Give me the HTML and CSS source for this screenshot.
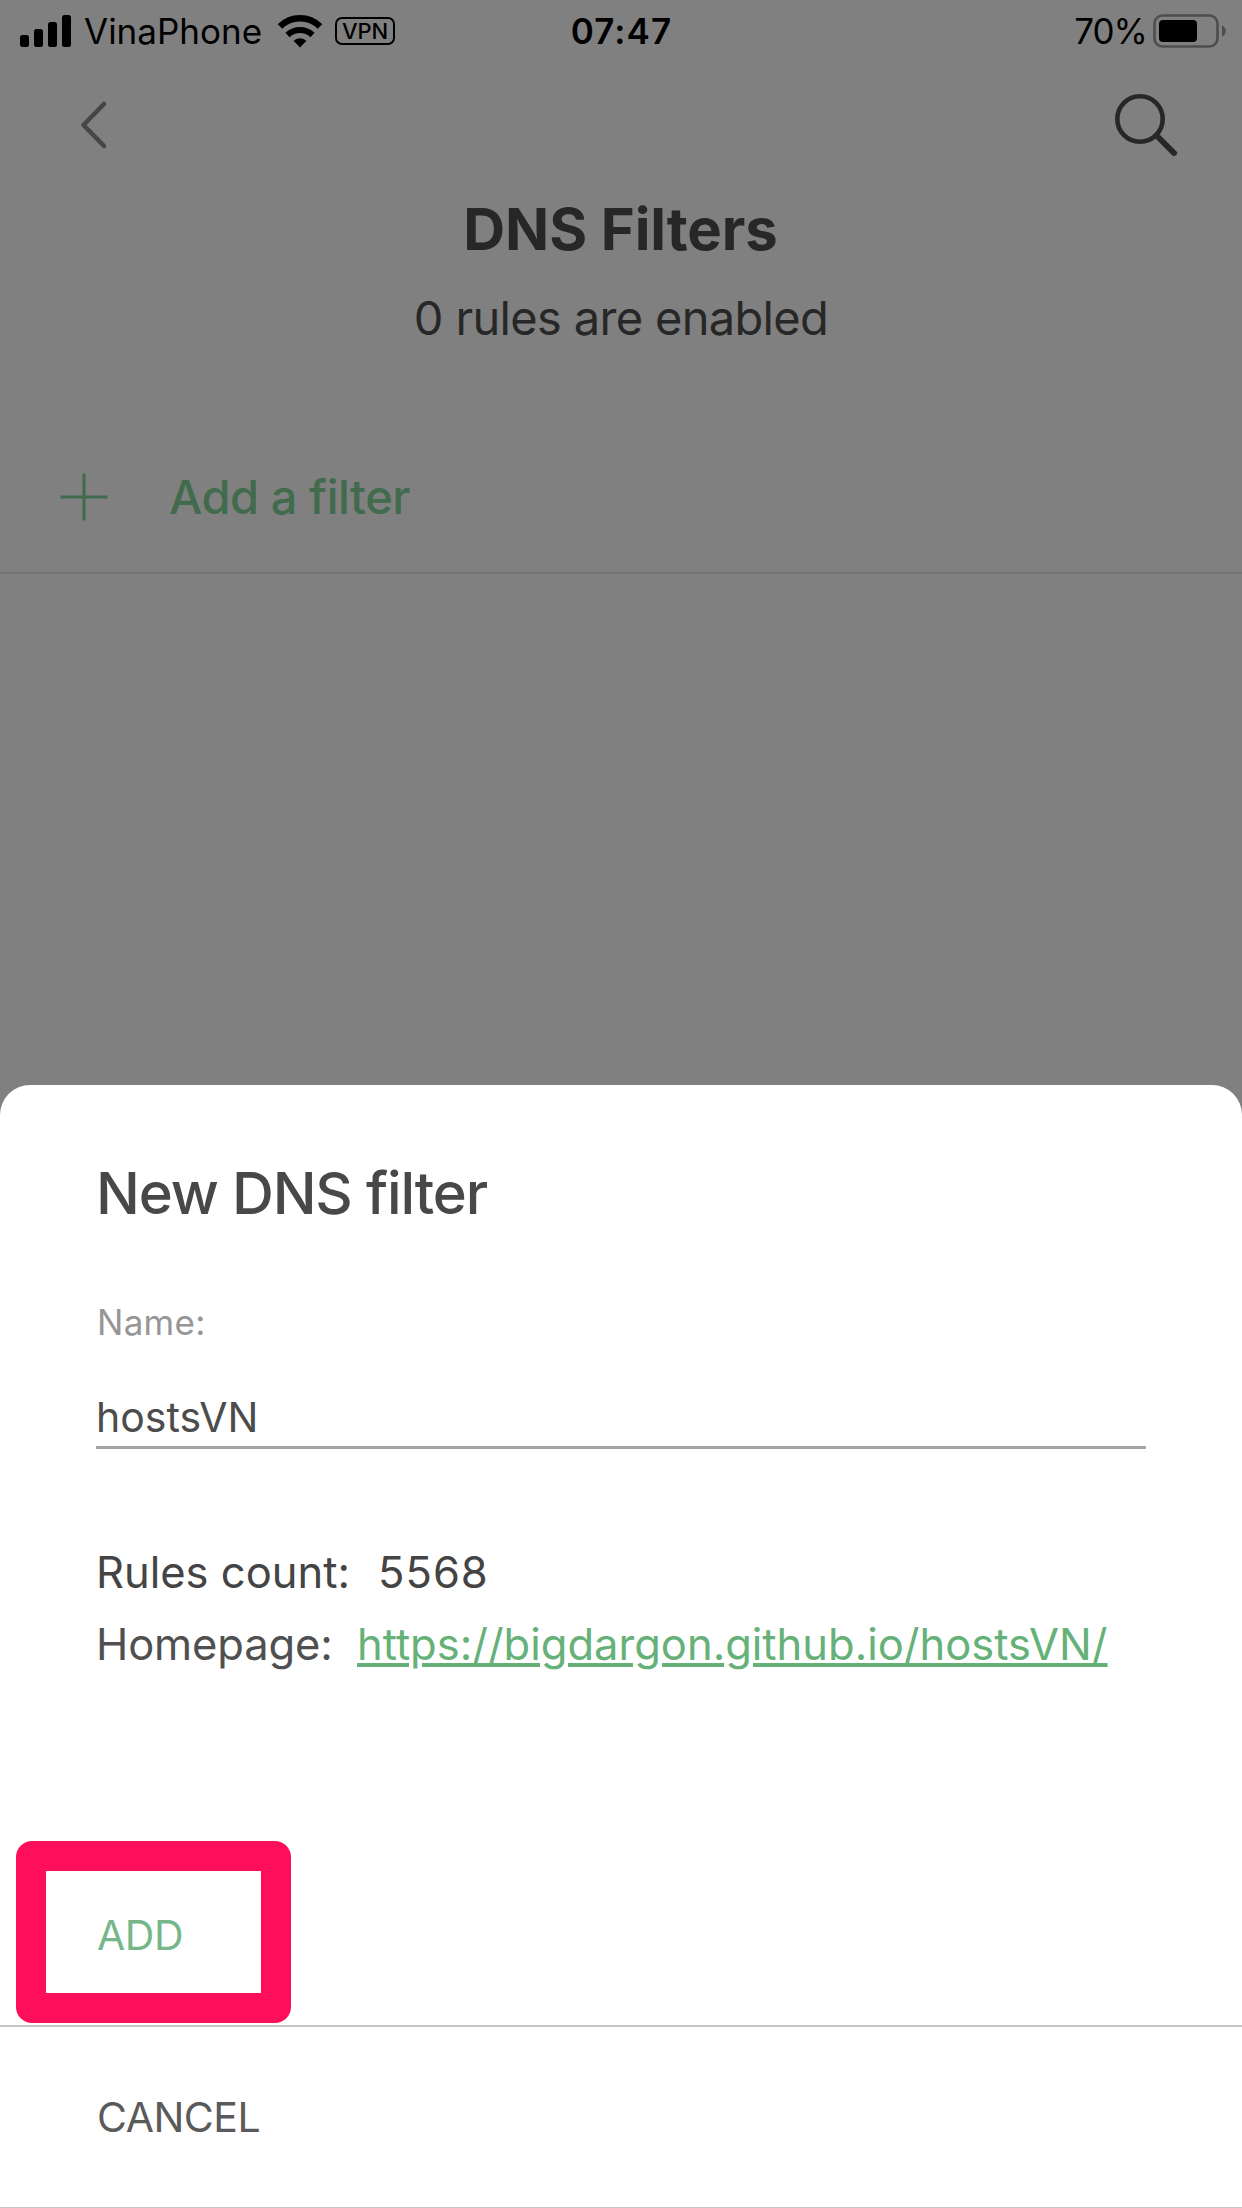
FILE: index.html
```html
<!DOCTYPE html>
<html lang="en">
<head>
<meta charset="utf-8">
<title>DNS Filters</title>
<link rel="stylesheet" href="styles.css">
</head>
<body>
<div class="screen">
  <header class="status">
    <div class="status-left">
      <svg class="signal" width="51" height="32" viewBox="0 0 51 32"><rect x="0" y="20" width="9" height="12" rx="2.5"/><rect x="14" y="14" width="9" height="18" rx="2.5"/><rect x="28" y="7" width="9" height="25" rx="2.5"/><rect x="42" y="0" width="9" height="32" rx="2.5"/></svg>
      <span class="carrier">VinaPhone</span>
      <svg class="wifi" width="46" height="34" viewBox="0 0 46 34"><path d="M3 12.5a28.500 28.500 0 0 1 40 0" fill="none" stroke="#000" stroke-width="6.500"/><path d="M10.500 21a18 18 0 0 1 25 0" fill="none" stroke="#000" stroke-width="6"/><path d="M16.500 26.800a9.500 9.500 0 0 1 13 0L23 33.500z"/></svg>
      <span class="vpn">VPN</span>
    </div>
    <span class="time">07:47</span>
    <div class="status-right">
      <span class="percent">70%</span>
      <svg class="battery" width="74" height="34" viewBox="0 0 74 34"><rect x="1.500" y="1.500" width="63" height="31" rx="8" fill="none" stroke="#4d4d4d" stroke-width="2.600"/><rect x="6" y="6" width="38" height="22" rx="4"/><path d="M69 11.500c5 1.500 5 9.500 0 11z" fill="#4d4d4d"/></svg>
    </div>
  </header>
  <nav class="nav">
    <svg width="26" height="48" viewBox="0 0 26 48"><path d="M24 3L3.500 24L24 45" fill="none" stroke="#464646" stroke-width="4.600" stroke-linecap="round" stroke-linejoin="round"/></svg>
    <svg width="64" height="64" viewBox="0 0 64 64"><circle cx="26" cy="26" r="22.700" fill="none" stroke="#272727" stroke-width="4.600"/><path d="M42.500 42.500L60 60" stroke="#272727" stroke-width="6" stroke-linecap="round"/></svg>
  </nav>
  <h1 class="title">DNS Filters</h1>
  <p class="subtitle">0 rules are enabled</p>
  <div class="add-row">
    <svg width="48" height="48" viewBox="0 0 48 48"><path d="M24 .5v47M.5 24h47" stroke="#426b4e" stroke-width="3"/></svg>
    <span class="add-label">Add a filter</span>
  </div>
  <section class="sheet">
    <h2 class="sheet-title">New DNS filter</h2>
    <div class="label">Name:</div>
    <div class="field">hostsVN</div>
    <div class="info rules"><span class="key">Rules count:</span><span class="count">5568</span></div>
    <div class="info home"><span class="key">Homepage:</span><a class="link">https://bigdargon.github.io/hostsVN/</a></div>
    <div class="action add">ADD<i class="marker"></i></div>
    <div class="action cancel">CANCEL</div>
  </section>
</div>
</body>
</html>
```
FILE: styles.css
```css
* { box-sizing: border-box; }
body { margin: 0; background: #808080; font-family: Inter, "Liberation Sans", sans-serif; }
h1, h2, p { margin: 0; }
svg { display: block; flex: none; }
span, a { white-space: nowrap; }
.screen { width: 1242px; height: 2208px; overflow: hidden; display: flex; flex-direction: column; color: #272727; }
.status { height: 62px; display: grid; grid-template-columns: 1fr auto 1fr; align-items: center; padding: 0 15px 0 20px; font-size: 35px; color: #000; }
.status-left, .status-right { display: flex; align-items: center; }
.status-right { justify-content: flex-end; }
.carrier { margin-left: 13px; }
.wifi { margin-left: 15px; }
.vpn { margin-left: 12px; width: 60px; height: 28px; border: 2px solid #000; border-radius: 7px; display: flex; align-items: center; justify-content: center; font-size: 22px; font-weight: 500; }
.time { font-weight: 600; letter-spacing: 1.1px; margin-right: 4px; }
.percent { letter-spacing: -1px; }
.battery { margin-left: 6px; }
.nav { height: 126px; display: flex; align-items: center; justify-content: space-between; padding: 0 64px 0 80px; }
.title { height: 82px; line-height: 82px; text-align: center; font-size: 58px; font-weight: 700; letter-spacing: -0.1px; padding-right: 1px; }
.subtitle { height: 96px; line-height: 96px; text-align: center; font-size: 47px; letter-spacing: -0.67px; }
.add-row { height: 152px; margin-top: 56px; padding-left: 60px; display: flex; align-items: center; border-bottom: 2px solid #767676; color: #426b4e; font-size: 47px; font-weight: 500; letter-spacing: -0.45px; }
.add-label { margin-left: 61px; padding-bottom: 2px; }
.sheet { margin-top: 511px; height: 1123px; padding-top: 68px; background: #fff; border-radius: 30px 30px 0 0; color: #484848; }
.sheet-title { height: 80px; line-height: 80px; padding-left: 96px; font-size: 58px; font-weight: 500; letter-spacing: -1.15px; }
.label { margin-top: 69px; height: 41px; line-height: 41px; padding-left: 97px; font-size: 35px; letter-spacing: 0.3px; color: #969696; }
.field { margin: 46px 96px 0; height: 60px; line-height: 57px; font-size: 41px; border-bottom: 3px solid #a4a4a4; color: #4c4c4c; }
.info { display: grid; grid-template-columns: 261px auto; justify-content: start; padding-left: 96px; font-size: 43.5px; line-height: 71px; height: 71px; }
.rules { margin-top: 88px; color: #444; grid-template-columns: 282px auto; }
.count { letter-spacing: 1px; }
.home { line-height: 72px; height: 72px; letter-spacing: -0.15px; color: #505050; }
.link { color: #65b178; text-decoration: underline; letter-spacing: 0; }
.action { position: relative; height: 182px; line-height: 180px; padding-left: 97px; font-size: 41px; letter-spacing: -0.5px; border-bottom: 2px solid #c6c6c6; }
.add { margin-top: 165px; color: #75b78a; }
.marker { position: absolute; left: 16px; top: -4px; width: 275px; height: 182px; border: 30px solid #ff0f5b; border-radius: 16px; }
.cancel { height: 181px; border-bottom-width: 1px; color: #5a5a5a; }
```
